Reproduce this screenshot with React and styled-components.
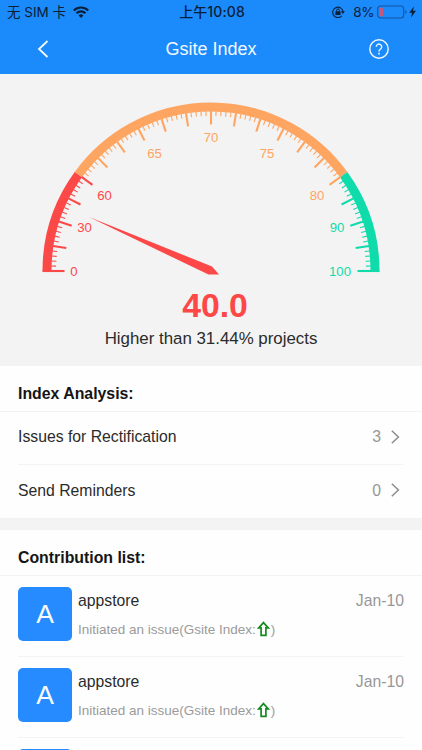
import styled, { createGlobalStyle } from "styled-components";

const GlobalStyle = createGlobalStyle`
  * {
    box-sizing: border-box;
  }
  body {
    margin: 0;
    background: #fefefe;
    overflow: hidden;
    font-family: "Liberation Sans", Arial, sans-serif;
  }
  h1, h2, p {
    margin: 0;
  }
`;

const Screen = styled.div`
  width: 422px;
  height: 750px;
  overflow: hidden;
  display: flex;
  flex-direction: column;
  background: #fefefe;
  color: #2b2b2b;
  font-size: 15.75px;
`;

const Top = styled.header`
  flex: none;
  height: 74px;
  background: #1b8afb;
`;

const StatusBar = styled.div`
  height: 24px;
  display: grid;
  grid-template-columns: 1fr auto 1fr;
  align-items: center;
  padding: 0 5px 0 7px;
  color: #0a2038;
  font-family: Inter, "Noto Sans CJK SC", sans-serif;
  font-size: 13.5px;
  line-height: 24px;
  svg {
    display: block;
  }
`;

const StatusGroup = styled.div`
  display: flex;
  align-items: center;
  justify-content: ${(p) => (p.$end ? "flex-end" : "flex-start")};
  gap: ${(p) => (p.$end ? 0 : 7)}px;
  white-space: nowrap;
`;

const Clock = styled.span`
  font-size: 14px;
  font-weight: 500;
  letter-spacing: 0.1px;
`;

const Percent = styled.span`
  margin: 0 3px 0 8px;
  letter-spacing: -0.4px;
`;

const NavBar = styled.nav`
  height: 50px;
  display: grid;
  grid-template-columns: 1fr auto 1fr;
  align-items: center;
  padding: 0 33px 0 37px;
  color: #f2f9ff;
  h1 {
    margin-right: 4px;
    font-size: 18px;
    font-weight: 400;
  }
  svg {
    display: block;
  }
  svg:last-child {
    justify-self: end;
  }
`;

const GaugePanel = styled.section`
  flex: none;
  height: 292px;
  display: flex;
  flex-direction: column;
  align-items: center;
  background: #f3f3f3;
  svg {
    display: block;
  }
`;

const Score = styled.strong`
  margin: 1px 0 0 8px;
  color: #fd4848;
  font-size: 33.75px;
  line-height: 38px;
`;

const Compare = styled.p`
  margin-top: 5px;
  font-size: 16.875px;
  line-height: 20px;
`;

const Section = styled.section`
  flex: none;
  & + & {
    border-top: 12px solid #f3f3f3;
  }
`;

const SectionTitle = styled.h2`
  height: 46px;
  padding: 1px 18px 0;
  border-bottom: 1px solid #f2f2f2;
  color: #151515;
  font-size: 15.85px;
  line-height: 54px;
`;

const Row = styled.div`
  height: ${(p) => p.$height}px;
  margin: 0 18px;
  padding-bottom: 2px;
  display: flex;
  align-items: center;
  & + & {
    border-top: 1px solid #f4f4f4;
  }
`;

const Label = styled.span`
  flex: 1;
`;

const Count = styled.span`
  margin-right: 10px;
  color: #979797;
`;

const Entry = styled.article`
  height: 81px;
  margin: 0 18px;
  padding-top: 11px;
  display: flex;
  border-bottom: 1px solid #f4f4f4;
`;

const Avatar = styled.div`
  width: 54px;
  height: 54px;
  margin-right: 6px;
  border-radius: 5px;
  background: #268bfe;
  color: #f7fbff;
  font-size: 26.5px;
  line-height: 54px;
  text-align: center;
`;

const EntryBody = styled.div`
  flex: 1;
  padding-top: 4px;
`;

const EntryHead = styled.div`
  display: flex;
  justify-content: space-between;
  line-height: 20px;
  time {
    color: #979797;
  }
`;

const EntryText = styled.p`
  display: flex;
  align-items: center;
  margin-top: 9px;
  color: #9b9b9b;
  font-size: 13.5px;
  line-height: 20px;
  svg {
    flex: none;
    margin: -2px 1px 0 1px;
  }
`;

const RED = "#fd4848";
const ORANGE = "#ffa562";
const GREEN = "#10dbaa";

const CX = 211;
const CY = 197;

const labels = [
  { text: "0", x: 74, y: 197, color: RED },
  { text: "30", x: 84.5, y: 153.5, color: RED },
  { text: "60", x: 104.5, y: 121.5, color: RED },
  { text: "65", x: 154.5, y: 79, color: ORANGE },
  { text: "70", x: 211, y: 63.5, color: ORANGE },
  { text: "75", x: 267, y: 79, color: ORANGE },
  { text: "80", x: 317, y: 121.5, color: ORANGE },
  { text: "90", x: 337, y: 153.5, color: GREEN },
  { text: "100", x: 340, y: 197, color: GREEN },
];

const entries = [
  { id: 1, name: "appstore", date: "Jan-10" },
  { id: 2, name: "appstore", date: "Jan-10" },
];

// step is 0..100 along the half circle, left to right
function point(step, r) {
  const a = Math.PI * (1 - step / 100);
  return [CX + r * Math.cos(a), CY - r * Math.sin(a)];
}

function arc(from, to) {
  const [x1, y1] = point(from, 164);
  const [x2, y2] = point(to, 164);
  return `M${x1} ${y1}A164 164 0 0 1 ${x2} ${y2}`;
}

function colorAt(step) {
  if (step <= 20) return RED;
  return step <= 80 ? ORANGE : GREEN;
}

function Gauge() {
  const ticks = Array.from({ length: 101 }, (_, i) => i);
  return (
    <svg width="422" height="211" viewBox="0 0 422 211">
      <g fill="none" strokeWidth="9">
        <path d={arc(20, 80)} stroke={ORANGE} />
        <path d={arc(0, 20)} stroke={RED} />
        <path d={arc(80, 100)} stroke={GREEN} />
      </g>
      {ticks.map((i) => {
        const major = i % 5 === 0;
        const edge = i === 0 || i === 100;
        const [x1, y1] = point(i, edge ? 168.5 : 160);
        const [x2, y2] = point(i, major ? 146.5 : 155);
        return (
          <line
            key={i}
            x1={x1}
            y1={y1}
            x2={x2}
            y2={y2}
            stroke={colorAt(i)}
            strokeWidth={major ? 2.1 : 1.1}
          />
        );
      })}
      {labels.map((l) => (
        <text
          key={l.text}
          x={l.x}
          y={l.y + 4.7}
          fill={l.color}
          fontSize="13.2"
          textAnchor="middle"
        >
          {l.text}
        </text>
      ))}
      <path d="M89 143L212 192.5L219 200.4L208.5 200.6Z" fill={RED} />
    </svg>
  );
}

function WifiIcon() {
  return (
    <svg width="16" height="12" viewBox="0 0 16 12">
      <g fill="none" stroke="currentColor" strokeWidth="2.1">
        <path d="M0.8 4.4a10.3 10.3 0 0 1 14.4 0" />
        <path d="M3.5 7.2a6.4 6.4 0 0 1 9 0" />
      </g>
      <path d="M8 11.9L5.6 9.4a3.4 3.4 0 0 1 4.8 0z" fill="currentColor" />
    </svg>
  );
}

function LockIcon() {
  return (
    <svg width="13" height="12" viewBox="0 0 13 12">
      <path
        d="M9.8 9.9A5.2 5.2 0 1 1 11.1 5.6"
        fill="none"
        stroke="currentColor"
        strokeWidth="1.1"
      />
      <path d="M8.9 5.3h4L10.9 8z" fill="currentColor" />
      <rect x="3.4" y="5.2" width="5.2" height="3.9" rx="0.5" fill="currentColor" />
      <path
        d="M4.6 5.5V4.3a1.4 1.4 0 0 1 2.8 0v1.2"
        fill="none"
        stroke="currentColor"
        strokeWidth="1"
      />
    </svg>
  );
}

function BatteryIcon() {
  return (
    <svg width="40" height="14" viewBox="0 0 40 14">
      <rect
        x="0.7"
        y="1"
        width="26"
        height="12"
        rx="3"
        fill="none"
        stroke="#14569f"
        strokeWidth="1.1"
      />
      <path d="M28.3 5v4q1.3-.6 1.3-2t-1.3-2z" fill="#14569f" />
      <path
        d="M4 2.8h2v8.4H4a1.6 1.6 0 0 1-1.6-1.6V4.4A1.6 1.6 0 0 1 4 2.8z"
        fill="#c5587d"
      />
      <path d="M36.9 1.6L32.2 7.8h2.9L34 12.4l5-6.6h-3z" fill="currentColor" />
    </svg>
  );
}

function BackIcon() {
  return (
    <svg width="12" height="18" viewBox="0 0 12 18">
      <path d="M10.5 1L2 9l8.5 8" fill="none" stroke="currentColor" strokeWidth="1.8" />
    </svg>
  );
}

function HelpIcon() {
  return (
    <svg width="20" height="20" viewBox="0 0 20 20" fill="none" stroke="currentColor">
      <circle cx="10" cy="10" r="9.2" strokeWidth="1.4" />
      <path
        d="M7.3 7.8a2.7 2.7 0 1 1 4.6 1.9C10.8 10.7 10 11 10 12.5"
        strokeWidth="1.4"
      />
      <path d="M10 13.8v1.6" strokeWidth="1.6" />
    </svg>
  );
}

function ChevronIcon() {
  return (
    <svg width="13" height="15" viewBox="0 0 13 15">
      <path d="M0.8 0.8l6.6 6.2-6.6 6.2" fill="none" stroke="#8c8c8c" strokeWidth="1.5" />
    </svg>
  );
}

function UpIcon() {
  return (
    <svg width="13" height="16" viewBox="0 0 13 16">
      <path
        d="M6.5 1.6L11.3 6.8H8.9V14.4H4.1V6.8H1.7z"
        fill="none"
        stroke="#148a1c"
        strokeWidth="1.7"
      />
    </svg>
  );
}

export default function App() {
  return (
    <Screen>
      <GlobalStyle />
      <Top>
        <StatusBar>
          <StatusGroup>
            <span>无 SIM 卡</span>
            <WifiIcon />
          </StatusGroup>
          <Clock>上午10:08</Clock>
          <StatusGroup $end>
            <LockIcon />
            <Percent>8%</Percent>
            <BatteryIcon />
          </StatusGroup>
        </StatusBar>
        <NavBar>
          <BackIcon />
          <h1>Gsite Index</h1>
          <HelpIcon />
        </NavBar>
      </Top>
      <GaugePanel>
        <Gauge />
        <Score>40.0</Score>
        <Compare>Higher than 31.44% projects</Compare>
      </GaugePanel>
      <Section>
        <SectionTitle>Index Analysis:</SectionTitle>
        <Row $height={52}>
          <Label>Issues for Rectification</Label>
          <Count>3</Count>
          <ChevronIcon />
        </Row>
        <Row $height={54}>
          <Label>Send Reminders</Label>
          <Count>0</Count>
          <ChevronIcon />
        </Row>
      </Section>
      <Section>
        <SectionTitle>Contribution list:</SectionTitle>
        {entries.map((e) => (
          <Entry key={e.id}>
            <Avatar>A</Avatar>
            <EntryBody>
              <EntryHead>
                <span>{e.name}</span>
                <time>{e.date}</time>
              </EntryHead>
              <EntryText>
                Initiated an issue(Gsite Index:
                <UpIcon />)
              </EntryText>
            </EntryBody>
          </Entry>
        ))}
        <Entry>
          <Avatar />
        </Entry>
      </Section>
    </Screen>
  );
}
